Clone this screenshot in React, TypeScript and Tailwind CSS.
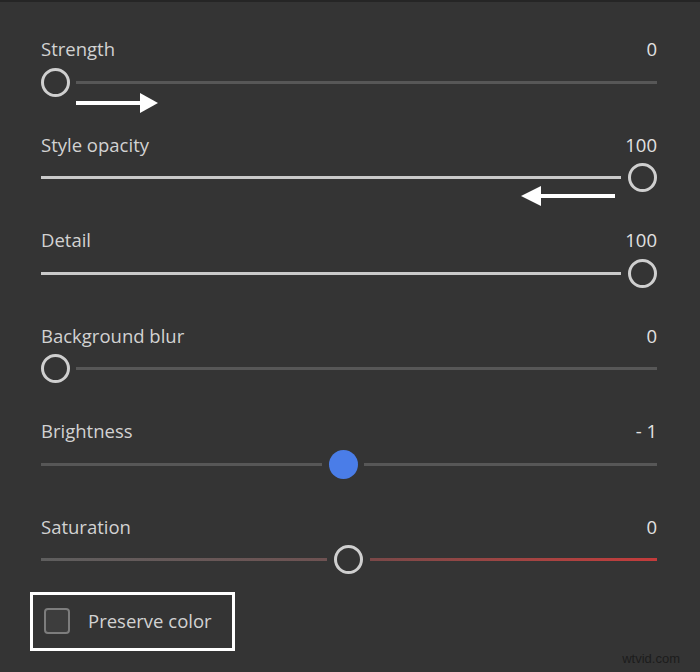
import React from "react";

const font = { fontFamily: '"Open Sans", "Liberation Sans", sans-serif' };

const Thumb = ({ filled = false }: { filled?: boolean }) =>
    filled ? (
        <div className="w-[29px] h-[29px] rounded-full bg-[#4a7de8] shrink-0" />
    ) : (
        <div className="w-[29px] h-[29px] rounded-full border-[3px] border-[#cfcfcf] shrink-0" />
    );

const Label = ({ name, value }: { name: string; value: string }) => (
    <div className="h-[24px] flex items-center justify-between text-[18.5px] text-[#d2d2d2]">
        <span>{name}</span>
        <span className="text-[#e2e2e2]">{value}</span>
    </div>
);

const App = () => {
    return (
        <div
            className="relative w-[700px] h-[672px] bg-[#343434] border-t-2 border-[#252525] overflow-hidden"
            style={font}
        >
            <div className="pl-[41px] pr-[43px] pt-[35px]">
                {/* Strength */}
                <div className="h-[95.5px] relative">
                    <Label name="Strength" value="0" />
                    <div className="mt-[6px] h-[30px] flex items-center">
                        <Thumb />
                        <div className="ml-[6px] flex-1 h-[3px] bg-[#575757]" />
                    </div>
                    <svg className="absolute left-[35px] top-[55px]" width="84" height="22" viewBox="0 0 84 22">
                        <rect x="0" y="9" width="68" height="4" fill="#fff" />
                        <polygon points="64,1 82,11 64,21" fill="#fff" />
                    </svg>
                </div>

                {/* Style opacity */}
                <div className="h-[95.5px] relative">
                    <Label name="Style opacity" value="100" />
                    <div className="mt-[6px] h-[30px] flex items-center">
                        <div className="flex-1 h-[3px] bg-[#cacaca] mr-[7px]" />
                        <Thumb />
                    </div>
                    <svg className="absolute left-[479px] top-[52px]" width="96" height="22" viewBox="0 0 96 22">
                        <rect x="16" y="9" width="79" height="4" fill="#fff" />
                        <polygon points="21,1 1,11 21,21" fill="#fff" />
                    </svg>
                </div>

                {/* Detail */}
                <div className="h-[95.5px]">
                    <Label name="Detail" value="100" />
                    <div className="mt-[6px] h-[30px] flex items-center">
                        <div className="flex-1 h-[3px] bg-[#cacaca] mr-[7px]" />
                        <Thumb />
                    </div>
                </div>

                {/* Background blur */}
                <div className="h-[95.5px]">
                    <Label name="Background blur" value="0" />
                    <div className="mt-[6px] h-[30px] flex items-center">
                        <Thumb />
                        <div className="ml-[6px] flex-1 h-[3px] bg-[#575757]" />
                    </div>
                </div>

                {/* Brightness */}
                <div className="h-[95.5px]">
                    <Label name="Brightness" value="- 1" />
                    <div className="mt-[6px] h-[30px] flex items-center">
                        <div className="w-[281px] h-[3px] bg-[#575757] mr-[7px]" />
                        <Thumb filled />
                        <div className="ml-[6px] flex-1 h-[3px] bg-[#575757]" />
                    </div>
                </div>

                {/* Saturation */}
                <div className="h-[77px]">
                    <Label name="Saturation" value="0" />
                    <div className="mt-[6px] h-[30px] flex items-center">
                        <div className="w-[286px] h-[3px] bg-gradient-to-r from-[#5e5e5e] to-[#6e5252] mr-[7px]" />
                        <Thumb />
                        <div className="ml-[7px] flex-1 h-[3px] bg-gradient-to-r from-[#7a4848] to-[#c43b3b]" />
                    </div>
                </div>

                {/* Preserve color */}
                <div className="-ml-[11px] w-[205px] h-[59px] border-[3px] border-white flex items-center pl-[11px]">
                    <div className="w-[26px] h-[26px] rounded-[4px] border-2 border-[#7d7d7d] bg-[#3d3d3d]" />
                    <span className="ml-[18px] text-[18.5px] text-[#d2d2d2]">Preserve color</span>
                </div>
            </div>

            <div
                className="absolute right-[20px] bottom-[4px] text-[13px] text-[#1c1c1c]"
                style={{ fontFamily: '"Liberation Sans", sans-serif' }}
            >
                wtvid.com
            </div>
        </div>
    );
};

export default App;
